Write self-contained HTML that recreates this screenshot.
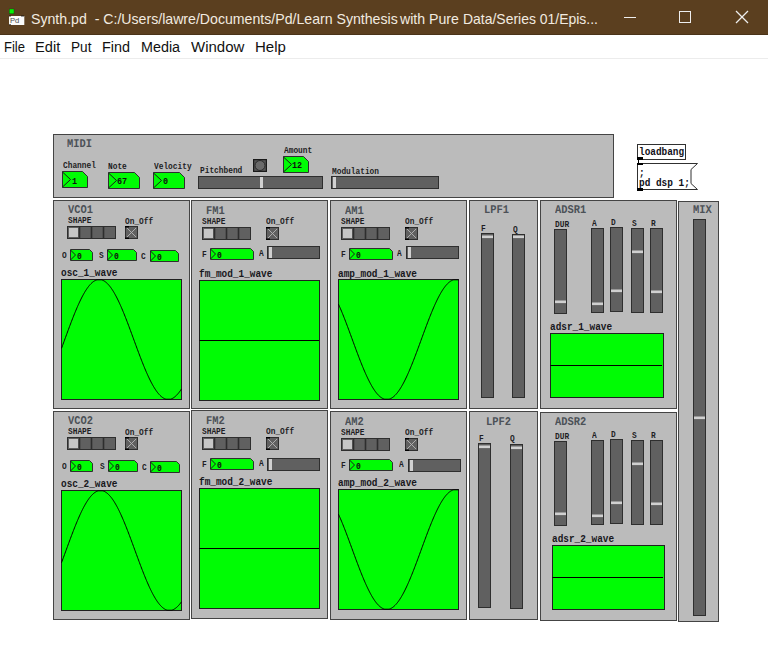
<!DOCTYPE html>
<html><head><meta charset="utf-8"><style>
html,body{margin:0;padding:0;width:768px;height:652px;overflow:hidden;background:#fff;position:relative}
.t{position:absolute;font-family:"Liberation Mono",monospace;white-space:pre;line-height:1;transform-origin:0 0}
.ui{position:absolute;font-family:"Liberation Sans",sans-serif;white-space:pre;line-height:1;transform-origin:0 0}
</style></head><body>
<div style="position:absolute;left:0;top:0;width:768px;height:35px;background:#5b3f1f"></div>
<div style="position:absolute;left:0;top:34px;width:768px;height:1px;background:#4a3318"></div>
<svg style="position:absolute;left:8px;top:8px" width="18" height="18"><rect x="1.2" y="1" width="4.8" height="4.8" fill="#06f006" stroke="#0a4a0a" stroke-width="0.4"/><rect x="1" y="8" width="15.3" height="9" fill="#fafafa"/><rect x="1" y="7.6" width="2" height="0.8" fill="#111"/><rect x="13" y="7.6" width="3" height="0.8" fill="#111"/><rect x="1" y="16.4" width="2" height="0.8" fill="#111"/><text x="1.9" y="14.9" font-family="Liberation Sans" font-size="7.6" fill="#4a4a4a">Pd</text></svg>
<div class="ui" style="left:31px;top:10.5px;font-size:15px;color:#f2ebe0;transform:scaleX(0.942)">Synth.pd  - C:/Users/lawre/Documents/Pd/Learn Synthesis</div>
<div class="ui" style="left:400px;top:10.5px;font-size:15px;color:#f2ebe0;transform:scaleX(0.942)">with Pure</div>
<div class="ui" style="left:463px;top:10.5px;font-size:15px;color:#f2ebe0;transform:scaleX(0.930)">Data/Series 01/Epis...</div>
<div style="position:absolute;left:624px;top:17px;width:12px;height:1px;background:#eee"></div>
<div style="position:absolute;left:679px;top:11px;width:12px;height:12px;box-sizing:border-box;border:1px solid #eee"></div>
<svg style="position:absolute;left:735px;top:10px" width="14" height="14"><line x1="1" y1="1" x2="13" y2="13" stroke="#eee" stroke-width="1.2"/><line x1="13" y1="1" x2="1" y2="13" stroke="#eee" stroke-width="1.2"/></svg>
<div class="ui" style="left:3.6px;top:39.3px;font-size:15.5px;color:#111;transform:scaleX(0.842)">File</div>
<div class="ui" style="left:35px;top:39.3px;font-size:15.5px;color:#111;transform:scaleX(0.943)">Edit</div>
<div class="ui" style="left:70.9px;top:39.3px;font-size:15.5px;color:#111;transform:scaleX(0.878)">Put</div>
<div class="ui" style="left:101.9px;top:39.3px;font-size:15.5px;color:#111;transform:scaleX(0.929)">Find</div>
<div class="ui" style="left:141px;top:39.3px;font-size:15.5px;color:#111;transform:scaleX(0.926)">Media</div>
<div class="ui" style="left:191.2px;top:39.3px;font-size:15.5px;color:#111;transform:scaleX(0.968)">Window</div>
<div class="ui" style="left:255px;top:39.3px;font-size:15.5px;color:#111;transform:scaleX(0.968)">Help</div>
<div style="position:absolute;left:0;top:58px;width:768px;height:1px;background:#ececec"></div>
<div style="position:absolute;left:53px;top:134px;width:561px;height:64px;background:#bbbbbb;box-sizing:border-box;border:1px solid #444444;"></div>
<div class="t" style="left:67px;top:138.8px;font-size:11.8px;font-weight:bold;color:#4c5157;transform:scaleX(0.883);text-rendering:geometricPrecision;">MIDI</div>
<div class="t" style="left:62.5px;top:162px;font-size:9px;font-weight:bold;color:#1e1e24;transform:scaleX(0.87);">Channel</div>
<svg style="position:absolute;left:62px;top:171px" width="26" height="17"><polygon points="0.5,0.5 20.5,0.5 25.5,5.5 25.5,16.5 0.5,16.5" fill="#00fc04" stroke="#2e2e2e" stroke-width="1"/><polyline points="0.5,1 8.5,8.5 0.5,16" fill="none" stroke="#1a1a1a" stroke-width="1"/></svg>
<div class="t" style="left:71.5px;top:177px;font-size:9.2px;font-weight:bold;color:#101010;transform:scaleX(0.92);">1</div>
<div class="t" style="left:108px;top:163px;font-size:9px;font-weight:bold;color:#1e1e24;transform:scaleX(0.87);">Note</div>
<svg style="position:absolute;left:108px;top:172px" width="32" height="17"><polygon points="0.5,0.5 26.5,0.5 31.5,5.5 31.5,16.5 0.5,16.5" fill="#00fc04" stroke="#2e2e2e" stroke-width="1"/><polyline points="0.5,1 8.5,8.5 0.5,16" fill="none" stroke="#1a1a1a" stroke-width="1"/></svg>
<div class="t" style="left:117px;top:177.3px;font-size:9.2px;font-weight:bold;color:#101010;transform:scaleX(0.92);">67</div>
<div class="t" style="left:153.5px;top:163px;font-size:9px;font-weight:bold;color:#1e1e24;transform:scaleX(0.87);">Velocity</div>
<svg style="position:absolute;left:153px;top:172px" width="32" height="17"><polygon points="0.5,0.5 26.5,0.5 31.5,5.5 31.5,16.5 0.5,16.5" fill="#00fc04" stroke="#2e2e2e" stroke-width="1"/><polyline points="0.5,1 8.5,8.5 0.5,16" fill="none" stroke="#1a1a1a" stroke-width="1"/></svg>
<div class="t" style="left:162.5px;top:177.3px;font-size:9.2px;font-weight:bold;color:#101010;transform:scaleX(0.92);">0</div>
<div class="t" style="left:199.5px;top:167px;font-size:9px;font-weight:bold;color:#1e1e24;transform:scaleX(0.87);">Pitchbend</div>
<div style="position:absolute;left:198px;top:176px;width:125px;height:13px;background:#606060;box-sizing:border-box;border:1px solid #2e2e2e;"></div>
<div style="position:absolute;left:260px;top:177px;width:2.6px;height:11px;background:#d0d0d0"></div>
<svg style="position:absolute;left:253px;top:159px" width="14" height="13"><rect x="0.5" y="0.5" width="13" height="12" fill="#555" stroke="#1a1a1a" stroke-width="1.4"/><circle cx="7" cy="6.5" r="5" fill="#6a6a6a" stroke="#2a2a2a" stroke-width="1"/></svg>
<div class="t" style="left:284.2px;top:147px;font-size:9px;font-weight:bold;color:#1e1e24;transform:scaleX(0.87);">Amount</div>
<svg style="position:absolute;left:283px;top:156px" width="26" height="17"><polygon points="0.5,0.5 20.5,0.5 25.5,5.5 25.5,16.5 0.5,16.5" fill="#00fc04" stroke="#2e2e2e" stroke-width="1"/><polyline points="0.5,1 8.5,8.5 0.5,16" fill="none" stroke="#1a1a1a" stroke-width="1"/></svg>
<div class="t" style="left:291.5px;top:161.3px;font-size:9.2px;font-weight:bold;color:#101010;transform:scaleX(0.92);">12</div>
<div class="t" style="left:332px;top:168px;font-size:9px;font-weight:bold;color:#1e1e24;transform:scaleX(0.87);">Modulation</div>
<div style="position:absolute;left:331px;top:176px;width:108px;height:13px;background:#606060;box-sizing:border-box;border:1px solid #2e2e2e;"></div>
<div style="position:absolute;left:333px;top:177px;width:2.6px;height:11px;background:#d0d0d0"></div>
<div style="position:absolute;left:637px;top:144px;width:49px;height:16px;background:#fff;box-sizing:border-box;border:1px solid #303030;"></div>
<div class="t" style="left:639px;top:147.5px;font-size:10px;font-weight:bold;color:#101018;transform:scaleX(0.94);">loadbang</div>
<div style="position:absolute;left:637px;top:157px;width:6px;height:3px;background:#000;box-sizing:border-box;"></div>
<div style="position:absolute;left:638px;top:160px;width:1px;height:4px;background:#000;box-sizing:border-box;"></div>
<svg style="position:absolute;left:637px;top:163px" width="62" height="28"><polygon points="0.5,0.5 60.5,0.5 54,6.5 54,20.5 60.5,26.5 0.5,26.5" fill="#fff" stroke="#303030"/></svg>
<div style="position:absolute;left:637px;top:163px;width:6px;height:2px;background:#000;box-sizing:border-box;"></div>
<div style="position:absolute;left:637px;top:188px;width:6px;height:3px;background:#000;box-sizing:border-box;"></div>
<div class="t" style="left:639px;top:168.5px;font-size:10px;font-weight:bold;color:#101018;transform:scaleX(0.94);">;</div>
<div class="t" style="left:639px;top:178.8px;font-size:10px;font-weight:bold;color:#101018;transform:scaleX(0.94);">pd dsp 1;</div>
<div style="position:absolute;left:53px;top:200px;width:137px;height:209px;background:#bbbbbb;box-sizing:border-box;border:1px solid #444444;"></div>
<div class="t" style="left:67.5px;top:205.0px;font-size:11.8px;font-weight:bold;color:#4c5157;transform:scaleX(0.883);text-rendering:geometricPrecision;">VCO1</div>
<div class="t" style="left:67.7px;top:217px;font-size:9px;font-weight:bold;color:#1e1e24;transform:scaleX(0.87);">SHAPE</div>
<div class="t" style="left:125px;top:217.5px;font-size:9px;font-weight:bold;color:#1e1e24;transform:scaleX(0.87);">On_Off</div>
<svg style="position:absolute;left:67px;top:226px" width="49" height="13"><rect x="0.5" y="0.5" width="48" height="12" fill="#606060" stroke="#2e2e2e"/><line x1="12.5" y1="0" x2="12.5" y2="13" stroke="#2e2e2e" stroke-width="1.6"/><line x1="24.5" y1="0" x2="24.5" y2="13" stroke="#2e2e2e" stroke-width="1.6"/><line x1="36.5" y1="0" x2="36.5" y2="13" stroke="#2e2e2e" stroke-width="1.6"/><rect x="2" y="2" width="9" height="9" fill="#c6c6c6"/></svg>
<svg style="position:absolute;left:125px;top:226px" width="13" height="13"><rect x="0.5" y="0.5" width="12" height="12" fill="#606060" stroke="#2e2e2e"/><line x1="2" y1="2" x2="11" y2="11" stroke="#b4b4b4" stroke-width="0.9"/><line x1="11" y1="2" x2="2" y2="11" stroke="#b4b4b4" stroke-width="0.9"/><rect x="0" y="0" width="4" height="1.5" fill="#000"/><rect x="0" y="11.5" width="4" height="1.5" fill="#000"/></svg>
<div class="t" style="left:61.5px;top:252.2px;font-size:9px;font-weight:bold;color:#1e1e24;transform:scaleX(0.87);">O</div>
<svg style="position:absolute;left:70px;top:249px" width="23" height="12"><polygon points="0.5,0.5 19.5,0.5 22.5,3.5 22.5,11.5 0.5,11.5" fill="#00fc04" stroke="#2e2e2e" stroke-width="1"/><polyline points="0.5,1 5.5,6.0 0.5,11" fill="none" stroke="#1a1a1a" stroke-width="1"/></svg>
<div class="t" style="left:77px;top:253px;font-size:8.5px;font-weight:bold;color:#101010;transform:scaleX(0.95);">0</div>
<div class="t" style="left:99.0px;top:252.2px;font-size:9px;font-weight:bold;color:#1e1e24;transform:scaleX(0.87);">S</div>
<svg style="position:absolute;left:107px;top:249px" width="30" height="12"><polygon points="0.5,0.5 26.5,0.5 29.5,3.5 29.5,11.5 0.5,11.5" fill="#00fc04" stroke="#2e2e2e" stroke-width="1"/><polyline points="0.5,1 5.5,6.0 0.5,11" fill="none" stroke="#1a1a1a" stroke-width="1"/></svg>
<div class="t" style="left:114px;top:253px;font-size:8.5px;font-weight:bold;color:#101010;transform:scaleX(0.95);">0</div>
<div class="t" style="left:141px;top:253px;font-size:9px;font-weight:bold;color:#1e1e24;transform:scaleX(0.87);">C</div>
<svg style="position:absolute;left:149.5px;top:250px" width="29" height="12"><polygon points="0.5,0.5 25.5,0.5 28.5,3.5 28.5,11.5 0.5,11.5" fill="#00fc04" stroke="#2e2e2e" stroke-width="1"/><polyline points="0.5,1 5.5,6.0 0.5,11" fill="none" stroke="#1a1a1a" stroke-width="1"/></svg>
<div class="t" style="left:156.5px;top:254px;font-size:8.5px;font-weight:bold;color:#101010;transform:scaleX(0.95);">0</div>
<div class="t" style="left:60.7px;top:269px;font-size:10px;font-weight:bold;color:#17171c;transform:scaleX(0.94);">osc_1_wave</div>
<svg style="position:absolute;left:61px;top:279px" width="121" height="121"><rect x="0.5" y="0.5" width="120" height="120" fill="#00fc04" stroke="#202020"/><polyline points="0.50,69.35 1.00,67.99 1.50,66.64 2.00,65.28 2.50,63.91 3.00,62.55 3.50,61.18 4.00,59.82 4.50,58.45 5.00,57.09 5.50,55.72 6.00,54.36 6.50,53.01 7.00,51.65 7.50,50.31 8.00,48.96 8.50,47.62 9.00,46.29 9.50,44.97 10.00,43.66 10.50,42.35 11.00,41.05 11.50,39.77 12.00,38.49 12.50,37.22 13.00,35.97 13.50,34.73 14.00,33.50 14.50,32.29 15.00,31.09 15.50,29.91 16.00,28.74 16.50,27.59 17.00,26.46 17.50,25.34 18.00,24.25 18.50,23.17 19.00,22.11 19.50,21.07 20.00,20.05 20.50,19.05 21.00,18.07 21.50,17.12 22.00,16.19 22.50,15.28 23.00,14.39 23.50,13.53 24.00,12.69 24.50,11.88 25.00,11.09 25.50,10.33 26.00,9.59 26.50,8.88 27.00,8.20 27.50,7.54 28.00,6.92 28.50,6.32 29.00,5.74 29.50,5.20 30.00,4.68 30.50,4.20 31.00,3.74 31.50,3.31 32.00,2.91 32.50,2.54 33.00,2.21 33.50,1.90 34.00,1.62 34.50,1.37 35.00,1.16 35.50,0.97 36.00,0.81 36.50,0.80 37.00,0.80 37.50,0.80 38.00,0.80 38.50,0.80 39.00,0.80 39.50,0.80 40.00,0.80 40.50,0.81 41.00,0.97 41.50,1.16 42.00,1.37 42.50,1.62 43.00,1.90 43.50,2.21 44.00,2.54 44.50,2.91 45.00,3.31 45.50,3.74 46.00,4.20 46.50,4.68 47.00,5.20 47.50,5.74 48.00,6.32 48.50,6.92 49.00,7.54 49.50,8.20 50.00,8.88 50.50,9.59 51.00,10.33 51.50,11.09 52.00,11.88 52.50,12.69 53.00,13.53 53.50,14.39 54.00,15.28 54.50,16.19 55.00,17.12 55.50,18.07 56.00,19.05 56.50,20.05 57.00,21.07 57.50,22.11 58.00,23.17 58.50,24.25 59.00,25.34 59.50,26.46 60.00,27.59 60.50,28.74 61.00,29.91 61.50,31.09 62.00,32.29 62.50,33.50 63.00,34.73 63.50,35.97 64.00,37.22 64.50,38.49 65.00,39.77 65.50,41.05 66.00,42.35 66.50,43.66 67.00,44.97 67.50,46.29 68.00,47.62 68.50,48.96 69.00,50.31 69.50,51.65 70.00,53.01 70.50,54.36 71.00,55.72 71.50,57.09 72.00,58.45 72.50,59.82 73.00,61.18 73.50,62.55 74.00,63.91 74.50,65.28 75.00,66.64 75.50,67.99 76.00,69.35 76.50,70.69 77.00,72.04 77.50,73.38 78.00,74.71 78.50,76.03 79.00,77.34 79.50,78.65 80.00,79.95 80.50,81.23 81.00,82.51 81.50,83.78 82.00,85.03 82.50,86.27 83.00,87.50 83.50,88.71 84.00,89.91 84.50,91.09 85.00,92.26 85.50,93.41 86.00,94.54 86.50,95.66 87.00,96.75 87.50,97.83 88.00,98.89 88.50,99.93 89.00,100.95 89.50,101.95 90.00,102.93 90.50,103.88 91.00,104.81 91.50,105.72 92.00,106.61 92.50,107.47 93.00,108.31 93.50,109.12 94.00,109.91 94.50,110.67 95.00,111.41 95.50,112.12 96.00,112.80 96.50,113.46 97.00,114.08 97.50,114.68 98.00,115.26 98.50,115.80 99.00,116.32 99.50,116.80 100.00,117.26 100.50,117.69 101.00,118.09 101.50,118.46 102.00,118.79 102.50,119.10 103.00,119.38 103.50,119.63 104.00,119.84 104.50,120.03 105.00,120.19 105.50,120.20 106.00,120.20 106.50,120.20 107.00,120.20 107.50,120.20 108.00,120.20 108.50,120.20 109.00,120.20 109.50,120.19 110.00,120.03 110.50,119.84 111.00,119.63 111.50,119.38 112.00,119.10 112.50,118.79 113.00,118.46 113.50,118.09 114.00,117.69 114.50,117.26 115.00,116.80 115.50,116.32 116.00,115.80 116.50,115.26 117.00,114.68 117.50,114.08 118.00,113.46 118.50,112.80 119.00,112.12 119.50,111.41 120.00,110.67 120.50,109.91" fill="none" stroke="#000" stroke-width="1.0"/></svg>
<div style="position:absolute;left:53px;top:411px;width:137px;height:209px;background:#bbbbbb;box-sizing:border-box;border:1px solid #444444;"></div>
<div class="t" style="left:67.5px;top:416.0px;font-size:11.8px;font-weight:bold;color:#4c5157;transform:scaleX(0.883);text-rendering:geometricPrecision;">VCO2</div>
<div class="t" style="left:67.7px;top:428px;font-size:9px;font-weight:bold;color:#1e1e24;transform:scaleX(0.87);">SHAPE</div>
<div class="t" style="left:125px;top:428.5px;font-size:9px;font-weight:bold;color:#1e1e24;transform:scaleX(0.87);">On_Off</div>
<svg style="position:absolute;left:67px;top:437px" width="49" height="13"><rect x="0.5" y="0.5" width="48" height="12" fill="#606060" stroke="#2e2e2e"/><line x1="12.5" y1="0" x2="12.5" y2="13" stroke="#2e2e2e" stroke-width="1.6"/><line x1="24.5" y1="0" x2="24.5" y2="13" stroke="#2e2e2e" stroke-width="1.6"/><line x1="36.5" y1="0" x2="36.5" y2="13" stroke="#2e2e2e" stroke-width="1.6"/><rect x="2" y="2" width="9" height="9" fill="#c6c6c6"/></svg>
<svg style="position:absolute;left:125px;top:437px" width="13" height="13"><rect x="0.5" y="0.5" width="12" height="12" fill="#606060" stroke="#2e2e2e"/><line x1="2" y1="2" x2="11" y2="11" stroke="#b4b4b4" stroke-width="0.9"/><line x1="11" y1="2" x2="2" y2="11" stroke="#b4b4b4" stroke-width="0.9"/><rect x="0" y="0" width="4" height="1.5" fill="#000"/><rect x="0" y="11.5" width="4" height="1.5" fill="#000"/></svg>
<div class="t" style="left:61.5px;top:463.2px;font-size:9px;font-weight:bold;color:#1e1e24;transform:scaleX(0.87);">O</div>
<svg style="position:absolute;left:70px;top:460px" width="23" height="12"><polygon points="0.5,0.5 19.5,0.5 22.5,3.5 22.5,11.5 0.5,11.5" fill="#00fc04" stroke="#2e2e2e" stroke-width="1"/><polyline points="0.5,1 5.5,6.0 0.5,11" fill="none" stroke="#1a1a1a" stroke-width="1"/></svg>
<div class="t" style="left:77px;top:464px;font-size:8.5px;font-weight:bold;color:#101010;transform:scaleX(0.95);">0</div>
<div class="t" style="left:99.5px;top:463.2px;font-size:9px;font-weight:bold;color:#1e1e24;transform:scaleX(0.87);">S</div>
<svg style="position:absolute;left:108px;top:460px" width="30" height="12"><polygon points="0.5,0.5 26.5,0.5 29.5,3.5 29.5,11.5 0.5,11.5" fill="#00fc04" stroke="#2e2e2e" stroke-width="1"/><polyline points="0.5,1 5.5,6.0 0.5,11" fill="none" stroke="#1a1a1a" stroke-width="1"/></svg>
<div class="t" style="left:115px;top:464px;font-size:8.5px;font-weight:bold;color:#101010;transform:scaleX(0.95);">0</div>
<div class="t" style="left:142px;top:464px;font-size:9px;font-weight:bold;color:#1e1e24;transform:scaleX(0.87);">C</div>
<svg style="position:absolute;left:149.5px;top:461px" width="30" height="12"><polygon points="0.5,0.5 26.5,0.5 29.5,3.5 29.5,11.5 0.5,11.5" fill="#00fc04" stroke="#2e2e2e" stroke-width="1"/><polyline points="0.5,1 5.5,6.0 0.5,11" fill="none" stroke="#1a1a1a" stroke-width="1"/></svg>
<div class="t" style="left:156.5px;top:465px;font-size:8.5px;font-weight:bold;color:#101010;transform:scaleX(0.95);">0</div>
<div class="t" style="left:60.7px;top:480px;font-size:10px;font-weight:bold;color:#17171c;transform:scaleX(0.94);">osc_2_wave</div>
<svg style="position:absolute;left:61px;top:490px" width="121" height="121"><rect x="0.5" y="0.5" width="120" height="120" fill="#00fc04" stroke="#202020"/><polyline points="0.50,72.71 1.00,71.37 1.50,70.02 2.00,68.67 2.50,67.31 3.00,65.96 3.50,64.59 4.00,63.23 4.50,61.87 5.00,60.50 5.50,59.13 6.00,57.77 6.50,56.41 7.00,55.04 7.50,53.69 8.00,52.33 8.50,50.98 9.00,49.63 9.50,48.29 10.00,46.96 10.50,45.63 11.00,44.31 11.50,43.00 12.00,41.70 12.50,40.41 13.00,39.13 13.50,37.85 14.00,36.60 14.50,35.35 15.00,34.12 15.50,32.90 16.00,31.69 16.50,30.50 17.00,29.32 17.50,28.17 18.00,27.02 18.50,25.90 19.00,24.79 19.50,23.70 20.00,22.63 20.50,21.59 21.00,20.56 21.50,19.55 22.00,18.56 22.50,17.59 23.00,16.65 23.50,15.73 24.00,14.83 24.50,13.96 25.00,13.11 25.50,12.28 26.00,11.48 26.50,10.71 27.00,9.96 27.50,9.23 28.00,8.54 28.50,7.87 29.00,7.23 29.50,6.61 30.00,6.03 30.50,5.47 31.00,4.94 31.50,4.44 32.00,3.96 32.50,3.52 33.00,3.11 33.50,2.72 34.00,2.37 34.50,2.05 35.00,1.75 35.50,1.49 36.00,1.26 36.50,1.06 37.00,0.89 37.50,0.80 38.00,0.80 38.50,0.80 39.00,0.80 39.50,0.80 40.00,0.80 40.50,0.80 41.00,0.80 41.50,0.80 42.00,0.89 42.50,1.06 43.00,1.26 43.50,1.49 44.00,1.75 44.50,2.05 45.00,2.37 45.50,2.72 46.00,3.11 46.50,3.52 47.00,3.96 47.50,4.44 48.00,4.94 48.50,5.47 49.00,6.03 49.50,6.61 50.00,7.23 50.50,7.87 51.00,8.54 51.50,9.23 52.00,9.96 52.50,10.71 53.00,11.48 53.50,12.28 54.00,13.11 54.50,13.96 55.00,14.83 55.50,15.73 56.00,16.65 56.50,17.59 57.00,18.56 57.50,19.55 58.00,20.56 58.50,21.59 59.00,22.63 59.50,23.70 60.00,24.79 60.50,25.90 61.00,27.02 61.50,28.17 62.00,29.32 62.50,30.50 63.00,31.69 63.50,32.90 64.00,34.12 64.50,35.35 65.00,36.60 65.50,37.85 66.00,39.13 66.50,40.41 67.00,41.70 67.50,43.00 68.00,44.31 68.50,45.63 69.00,46.96 69.50,48.29 70.00,49.63 70.50,50.98 71.00,52.33 71.50,53.69 72.00,55.04 72.50,56.41 73.00,57.77 73.50,59.13 74.00,60.50 74.50,61.87 75.00,63.23 75.50,64.59 76.00,65.96 76.50,67.31 77.00,68.67 77.50,70.02 78.00,71.37 78.50,72.71 79.00,74.04 79.50,75.37 80.00,76.69 80.50,78.00 81.00,79.30 81.50,80.59 82.00,81.87 82.50,83.15 83.00,84.40 83.50,85.65 84.00,86.88 84.50,88.10 85.00,89.31 85.50,90.50 86.00,91.68 86.50,92.83 87.00,93.98 87.50,95.10 88.00,96.21 88.50,97.30 89.00,98.37 89.50,99.41 90.00,100.44 90.50,101.45 91.00,102.44 91.50,103.41 92.00,104.35 92.50,105.27 93.00,106.17 93.50,107.04 94.00,107.89 94.50,108.72 95.00,109.52 95.50,110.29 96.00,111.04 96.50,111.77 97.00,112.46 97.50,113.13 98.00,113.77 98.50,114.39 99.00,114.97 99.50,115.53 100.00,116.06 100.50,116.56 101.00,117.04 101.50,117.48 102.00,117.89 102.50,118.28 103.00,118.63 103.50,118.95 104.00,119.25 104.50,119.51 105.00,119.74 105.50,119.94 106.00,120.11 106.50,120.20 107.00,120.20 107.50,120.20 108.00,120.20 108.50,120.20 109.00,120.20 109.50,120.20 110.00,120.20 110.50,120.20 111.00,120.11 111.50,119.94 112.00,119.74 112.50,119.51 113.00,119.25 113.50,118.95 114.00,118.63 114.50,118.28 115.00,117.89 115.50,117.48 116.00,117.04 116.50,116.56 117.00,116.06 117.50,115.53 118.00,114.97 118.50,114.39 119.00,113.77 119.50,113.13 120.00,112.46 120.50,111.77" fill="none" stroke="#000" stroke-width="1.0"/></svg>
<div style="position:absolute;left:191px;top:200px;width:137px;height:209px;background:#bbbbbb;box-sizing:border-box;border:1px solid #444444;"></div>
<div class="t" style="left:205.5px;top:205.5px;font-size:11.8px;font-weight:bold;color:#4c5157;transform:scaleX(0.883);text-rendering:geometricPrecision;">FM1</div>
<div class="t" style="left:201.7px;top:218px;font-size:9px;font-weight:bold;color:#1e1e24;transform:scaleX(0.87);">SHAPE</div>
<div class="t" style="left:265.5px;top:218px;font-size:9px;font-weight:bold;color:#1e1e24;transform:scaleX(0.87);">On_Off</div>
<svg style="position:absolute;left:201.5px;top:227px" width="49" height="13"><rect x="0.5" y="0.5" width="48" height="12" fill="#606060" stroke="#2e2e2e"/><line x1="12.5" y1="0" x2="12.5" y2="13" stroke="#2e2e2e" stroke-width="1.6"/><line x1="24.5" y1="0" x2="24.5" y2="13" stroke="#2e2e2e" stroke-width="1.6"/><line x1="36.5" y1="0" x2="36.5" y2="13" stroke="#2e2e2e" stroke-width="1.6"/><rect x="2" y="2" width="9" height="9" fill="#c6c6c6"/></svg>
<svg style="position:absolute;left:265.5px;top:227px" width="13" height="13"><rect x="0.5" y="0.5" width="12" height="12" fill="#606060" stroke="#2e2e2e"/><line x1="2" y1="2" x2="11" y2="11" stroke="#b4b4b4" stroke-width="0.9"/><line x1="11" y1="2" x2="2" y2="11" stroke="#b4b4b4" stroke-width="0.9"/><rect x="0" y="0" width="4" height="1.5" fill="#000"/><rect x="0" y="11.5" width="4" height="1.5" fill="#000"/></svg>
<div class="t" style="left:201.5px;top:251px;font-size:9px;font-weight:bold;color:#1e1e24;transform:scaleX(0.87);">F</div>
<svg style="position:absolute;left:210px;top:248px" width="44" height="12"><polygon points="0.5,0.5 40.5,0.5 43.5,3.5 43.5,11.5 0.5,11.5" fill="#00fc04" stroke="#2e2e2e" stroke-width="1"/><polyline points="0.5,1 5.5,6.0 0.5,11" fill="none" stroke="#1a1a1a" stroke-width="1"/></svg>
<div class="t" style="left:217px;top:252.4px;font-size:8.5px;font-weight:bold;color:#101010;transform:scaleX(0.95);">0</div>
<div class="t" style="left:258.5px;top:249.5px;font-size:9px;font-weight:bold;color:#1e1e24;transform:scaleX(0.87);">A</div>
<div style="position:absolute;left:267px;top:246px;width:53px;height:13px;background:#606060;box-sizing:border-box;border:1px solid #2e2e2e;"></div>
<div style="position:absolute;left:269px;top:247px;width:2.6px;height:11px;background:#d0d0d0"></div>
<div class="t" style="left:199.2px;top:270px;font-size:10px;font-weight:bold;color:#17171c;transform:scaleX(0.94);">fm_mod_1_wave</div>
<svg style="position:absolute;left:199px;top:280px" width="121" height="121"><rect x="0.5" y="0.5" width="120" height="120" fill="#00fc04" stroke="#202020"/><line x1="0.5" y1="60.5" x2="120" y2="60.5" stroke="#000" stroke-width="1.1"/></svg>
<div style="position:absolute;left:191px;top:410px;width:137px;height:209px;background:#bbbbbb;box-sizing:border-box;border:1px solid #444444;"></div>
<div class="t" style="left:205.5px;top:415.5px;font-size:11.8px;font-weight:bold;color:#4c5157;transform:scaleX(0.883);text-rendering:geometricPrecision;">FM2</div>
<div class="t" style="left:201.7px;top:428px;font-size:9px;font-weight:bold;color:#1e1e24;transform:scaleX(0.87);">SHAPE</div>
<div class="t" style="left:265.5px;top:428px;font-size:9px;font-weight:bold;color:#1e1e24;transform:scaleX(0.87);">On_Off</div>
<svg style="position:absolute;left:201.5px;top:437px" width="49" height="13"><rect x="0.5" y="0.5" width="48" height="12" fill="#606060" stroke="#2e2e2e"/><line x1="12.5" y1="0" x2="12.5" y2="13" stroke="#2e2e2e" stroke-width="1.6"/><line x1="24.5" y1="0" x2="24.5" y2="13" stroke="#2e2e2e" stroke-width="1.6"/><line x1="36.5" y1="0" x2="36.5" y2="13" stroke="#2e2e2e" stroke-width="1.6"/><rect x="2" y="2" width="9" height="9" fill="#c6c6c6"/></svg>
<svg style="position:absolute;left:265.5px;top:437px" width="13" height="13"><rect x="0.5" y="0.5" width="12" height="12" fill="#606060" stroke="#2e2e2e"/><line x1="2" y1="2" x2="11" y2="11" stroke="#b4b4b4" stroke-width="0.9"/><line x1="11" y1="2" x2="2" y2="11" stroke="#b4b4b4" stroke-width="0.9"/><rect x="0" y="0" width="4" height="1.5" fill="#000"/><rect x="0" y="11.5" width="4" height="1.5" fill="#000"/></svg>
<div class="t" style="left:201.5px;top:461px;font-size:9px;font-weight:bold;color:#1e1e24;transform:scaleX(0.87);">F</div>
<svg style="position:absolute;left:210px;top:458px" width="44" height="12"><polygon points="0.5,0.5 40.5,0.5 43.5,3.5 43.5,11.5 0.5,11.5" fill="#00fc04" stroke="#2e2e2e" stroke-width="1"/><polyline points="0.5,1 5.5,6.0 0.5,11" fill="none" stroke="#1a1a1a" stroke-width="1"/></svg>
<div class="t" style="left:217px;top:462.4px;font-size:8.5px;font-weight:bold;color:#101010;transform:scaleX(0.95);">0</div>
<div class="t" style="left:258.5px;top:459.5px;font-size:9px;font-weight:bold;color:#1e1e24;transform:scaleX(0.87);">A</div>
<div style="position:absolute;left:267px;top:458px;width:53px;height:13px;background:#606060;box-sizing:border-box;border:1px solid #2e2e2e;"></div>
<div style="position:absolute;left:269px;top:459px;width:2.6px;height:11px;background:#d0d0d0"></div>
<div class="t" style="left:199.2px;top:478px;font-size:10px;font-weight:bold;color:#17171c;transform:scaleX(0.94);">fm_mod_2_wave</div>
<svg style="position:absolute;left:199px;top:488px" width="121" height="121"><rect x="0.5" y="0.5" width="120" height="120" fill="#00fc04" stroke="#202020"/><line x1="0.5" y1="60.5" x2="120" y2="60.5" stroke="#000" stroke-width="1.1"/></svg>
<div style="position:absolute;left:330px;top:200px;width:137px;height:209px;background:#bbbbbb;box-sizing:border-box;border:1px solid #444444;"></div>
<div class="t" style="left:344.5px;top:205.5px;font-size:11.8px;font-weight:bold;color:#4c5157;transform:scaleX(0.883);text-rendering:geometricPrecision;">AM1</div>
<div class="t" style="left:340.7px;top:218px;font-size:9px;font-weight:bold;color:#1e1e24;transform:scaleX(0.87);">SHAPE</div>
<div class="t" style="left:404.5px;top:218px;font-size:9px;font-weight:bold;color:#1e1e24;transform:scaleX(0.87);">On_Off</div>
<svg style="position:absolute;left:340.5px;top:227px" width="49" height="13"><rect x="0.5" y="0.5" width="48" height="12" fill="#606060" stroke="#2e2e2e"/><line x1="12.5" y1="0" x2="12.5" y2="13" stroke="#2e2e2e" stroke-width="1.6"/><line x1="24.5" y1="0" x2="24.5" y2="13" stroke="#2e2e2e" stroke-width="1.6"/><line x1="36.5" y1="0" x2="36.5" y2="13" stroke="#2e2e2e" stroke-width="1.6"/><rect x="2" y="2" width="9" height="9" fill="#c6c6c6"/></svg>
<svg style="position:absolute;left:404.5px;top:227px" width="13" height="13"><rect x="0.5" y="0.5" width="12" height="12" fill="#606060" stroke="#2e2e2e"/><line x1="2" y1="2" x2="11" y2="11" stroke="#b4b4b4" stroke-width="0.9"/><line x1="11" y1="2" x2="2" y2="11" stroke="#b4b4b4" stroke-width="0.9"/><rect x="0" y="0" width="4" height="1.5" fill="#000"/><rect x="0" y="11.5" width="4" height="1.5" fill="#000"/></svg>
<div class="t" style="left:340.5px;top:251px;font-size:9px;font-weight:bold;color:#1e1e24;transform:scaleX(0.87);">F</div>
<svg style="position:absolute;left:349px;top:248px" width="44" height="12"><polygon points="0.5,0.5 40.5,0.5 43.5,3.5 43.5,11.5 0.5,11.5" fill="#00fc04" stroke="#2e2e2e" stroke-width="1"/><polyline points="0.5,1 5.5,6.0 0.5,11" fill="none" stroke="#1a1a1a" stroke-width="1"/></svg>
<div class="t" style="left:356px;top:252.4px;font-size:8.5px;font-weight:bold;color:#101010;transform:scaleX(0.95);">0</div>
<div class="t" style="left:397.0px;top:249.5px;font-size:9px;font-weight:bold;color:#1e1e24;transform:scaleX(0.87);">A</div>
<div style="position:absolute;left:406px;top:246px;width:53px;height:13px;background:#606060;box-sizing:border-box;border:1px solid #2e2e2e;"></div>
<div style="position:absolute;left:408px;top:247px;width:2.6px;height:11px;background:#d0d0d0"></div>
<div class="t" style="left:338.2px;top:270px;font-size:10px;font-weight:bold;color:#17171c;transform:scaleX(0.94);">amp_mod_1_wave</div>
<svg style="position:absolute;left:338px;top:279px" width="121" height="121"><rect x="0.5" y="0.5" width="120" height="120" fill="#00fc04" stroke="#202020"/><polyline points="0.50,25.23 1.00,26.35 1.50,27.48 2.00,28.63 2.50,29.79 3.00,30.97 3.50,32.17 4.00,33.38 4.50,34.61 5.00,35.85 5.50,37.10 6.00,38.36 6.50,39.64 7.00,40.92 7.50,42.22 8.00,43.52 8.50,44.84 9.00,46.16 9.50,47.49 10.00,48.83 10.50,50.17 11.00,51.52 11.50,52.87 12.00,54.23 12.50,55.59 13.00,56.95 13.50,58.32 14.00,59.68 14.50,61.05 15.00,62.41 15.50,63.78 16.00,65.14 16.50,66.50 17.00,67.86 17.50,69.21 18.00,70.56 18.50,71.90 19.00,73.24 19.50,74.57 20.00,75.90 20.50,77.21 21.00,78.52 21.50,79.82 22.00,81.11 22.50,82.38 23.00,83.65 23.50,84.90 24.00,86.15 24.50,87.37 25.00,88.59 25.50,89.79 26.00,90.97 26.50,92.14 27.00,93.29 27.50,94.43 28.00,95.55 28.50,96.65 29.00,97.73 29.50,98.79 30.00,99.83 30.50,100.85 31.00,101.85 31.50,102.83 32.00,103.79 32.50,104.72 33.00,105.63 33.50,106.52 34.00,107.39 34.50,108.23 35.00,109.04 35.50,109.83 36.00,110.60 36.50,111.33 37.00,112.05 37.50,112.73 38.00,113.39 38.50,114.02 39.00,114.63 39.50,115.20 40.00,115.75 40.50,116.27 41.00,116.76 41.50,117.22 42.00,117.65 42.50,118.05 43.00,118.42 43.50,118.76 44.00,119.07 44.50,119.35 45.00,119.60 45.50,119.82 46.00,120.01 46.50,120.17 47.00,120.20 47.50,120.20 48.00,120.20 48.50,120.20 49.00,120.20 49.50,120.20 50.00,120.20 50.50,120.20 51.00,120.20 51.50,120.05 52.00,119.86 52.50,119.65 53.00,119.41 53.50,119.13 54.00,118.83 54.50,118.49 55.00,118.13 55.50,117.73 56.00,117.30 56.50,116.85 57.00,116.37 57.50,115.85 58.00,115.31 58.50,114.74 59.00,114.15 59.50,113.52 60.00,112.87 60.50,112.19 61.00,111.48 61.50,110.75 62.00,109.99 62.50,109.20 63.00,108.39 63.50,107.56 64.00,106.70 64.50,105.81 65.00,104.91 65.50,103.98 66.00,103.02 66.50,102.05 67.00,101.05 67.50,100.04 68.00,99.00 68.50,97.94 69.00,96.86 69.50,95.77 70.00,94.65 70.50,93.52 71.00,92.37 71.50,91.21 72.00,90.03 72.50,88.83 73.00,87.62 73.50,86.39 74.00,85.15 74.50,83.90 75.00,82.64 75.50,81.36 76.00,80.08 76.50,78.78 77.00,77.48 77.50,76.16 78.00,74.84 78.50,73.51 79.00,72.17 79.50,70.83 80.00,69.48 80.50,68.13 81.00,66.77 81.50,65.41 82.00,64.05 82.50,62.68 83.00,61.32 83.50,59.95 84.00,58.59 84.50,57.22 85.00,55.86 85.50,54.50 86.00,53.14 86.50,51.79 87.00,50.44 87.50,49.10 88.00,47.76 88.50,46.43 89.00,45.10 89.50,43.79 90.00,42.48 90.50,41.18 91.00,39.89 91.50,38.62 92.00,37.35 92.50,36.10 93.00,34.85 93.50,33.63 94.00,32.41 94.50,31.21 95.00,30.03 95.50,28.86 96.00,27.71 96.50,26.57 97.00,25.45 97.50,24.35 98.00,23.27 98.50,22.21 99.00,21.17 99.50,20.15 100.00,19.15 100.50,18.17 101.00,17.21 101.50,16.28 102.00,15.37 102.50,14.48 103.00,13.61 103.50,12.77 104.00,11.96 104.50,11.17 105.00,10.40 105.50,9.67 106.00,8.95 106.50,8.27 107.00,7.61 107.50,6.98 108.00,6.37 108.50,5.80 109.00,5.25 109.50,4.73 110.00,4.24 110.50,3.78 111.00,3.35 111.50,2.95 112.00,2.58 112.50,2.24 113.00,1.93 113.50,1.65 114.00,1.40 114.50,1.18 115.00,0.99 115.50,0.83 116.00,0.80 116.50,0.80 117.00,0.80 117.50,0.80 118.00,0.80 118.50,0.80 119.00,0.80 119.50,0.80 120.00,0.80 120.50,0.95" fill="none" stroke="#000" stroke-width="1.0"/></svg>
<div style="position:absolute;left:330px;top:411px;width:137px;height:209px;background:#bbbbbb;box-sizing:border-box;border:1px solid #444444;"></div>
<div class="t" style="left:344.5px;top:416.5px;font-size:11.8px;font-weight:bold;color:#4c5157;transform:scaleX(0.883);text-rendering:geometricPrecision;">AM2</div>
<div class="t" style="left:340.7px;top:429px;font-size:9px;font-weight:bold;color:#1e1e24;transform:scaleX(0.87);">SHAPE</div>
<div class="t" style="left:404.5px;top:429px;font-size:9px;font-weight:bold;color:#1e1e24;transform:scaleX(0.87);">On_Off</div>
<svg style="position:absolute;left:340.5px;top:438px" width="49" height="13"><rect x="0.5" y="0.5" width="48" height="12" fill="#606060" stroke="#2e2e2e"/><line x1="12.5" y1="0" x2="12.5" y2="13" stroke="#2e2e2e" stroke-width="1.6"/><line x1="24.5" y1="0" x2="24.5" y2="13" stroke="#2e2e2e" stroke-width="1.6"/><line x1="36.5" y1="0" x2="36.5" y2="13" stroke="#2e2e2e" stroke-width="1.6"/><rect x="2" y="2" width="9" height="9" fill="#c6c6c6"/></svg>
<svg style="position:absolute;left:404.5px;top:438px" width="13" height="13"><rect x="0.5" y="0.5" width="12" height="12" fill="#606060" stroke="#2e2e2e"/><line x1="2" y1="2" x2="11" y2="11" stroke="#b4b4b4" stroke-width="0.9"/><line x1="11" y1="2" x2="2" y2="11" stroke="#b4b4b4" stroke-width="0.9"/><rect x="0" y="0" width="4" height="1.5" fill="#000"/><rect x="0" y="11.5" width="4" height="1.5" fill="#000"/></svg>
<div class="t" style="left:340.5px;top:462px;font-size:9px;font-weight:bold;color:#1e1e24;transform:scaleX(0.87);">F</div>
<svg style="position:absolute;left:349px;top:459px" width="44" height="12"><polygon points="0.5,0.5 40.5,0.5 43.5,3.5 43.5,11.5 0.5,11.5" fill="#00fc04" stroke="#2e2e2e" stroke-width="1"/><polyline points="0.5,1 5.5,6.0 0.5,11" fill="none" stroke="#1a1a1a" stroke-width="1"/></svg>
<div class="t" style="left:356px;top:463.4px;font-size:8.5px;font-weight:bold;color:#101010;transform:scaleX(0.95);">0</div>
<div class="t" style="left:398.5px;top:460.5px;font-size:9px;font-weight:bold;color:#1e1e24;transform:scaleX(0.87);">A</div>
<div style="position:absolute;left:408px;top:459px;width:53px;height:13px;background:#606060;box-sizing:border-box;border:1px solid #2e2e2e;"></div>
<div style="position:absolute;left:410px;top:460px;width:2.6px;height:11px;background:#d0d0d0"></div>
<div class="t" style="left:338.2px;top:479px;font-size:10px;font-weight:bold;color:#17171c;transform:scaleX(0.94);">amp_mod_2_wave</div>
<svg style="position:absolute;left:338px;top:489px" width="121" height="121"><rect x="0.5" y="0.5" width="120" height="120" fill="#00fc04" stroke="#202020"/><polyline points="0.50,25.23 1.00,26.35 1.50,27.48 2.00,28.63 2.50,29.79 3.00,30.97 3.50,32.17 4.00,33.38 4.50,34.61 5.00,35.85 5.50,37.10 6.00,38.36 6.50,39.64 7.00,40.92 7.50,42.22 8.00,43.52 8.50,44.84 9.00,46.16 9.50,47.49 10.00,48.83 10.50,50.17 11.00,51.52 11.50,52.87 12.00,54.23 12.50,55.59 13.00,56.95 13.50,58.32 14.00,59.68 14.50,61.05 15.00,62.41 15.50,63.78 16.00,65.14 16.50,66.50 17.00,67.86 17.50,69.21 18.00,70.56 18.50,71.90 19.00,73.24 19.50,74.57 20.00,75.90 20.50,77.21 21.00,78.52 21.50,79.82 22.00,81.11 22.50,82.38 23.00,83.65 23.50,84.90 24.00,86.15 24.50,87.37 25.00,88.59 25.50,89.79 26.00,90.97 26.50,92.14 27.00,93.29 27.50,94.43 28.00,95.55 28.50,96.65 29.00,97.73 29.50,98.79 30.00,99.83 30.50,100.85 31.00,101.85 31.50,102.83 32.00,103.79 32.50,104.72 33.00,105.63 33.50,106.52 34.00,107.39 34.50,108.23 35.00,109.04 35.50,109.83 36.00,110.60 36.50,111.33 37.00,112.05 37.50,112.73 38.00,113.39 38.50,114.02 39.00,114.63 39.50,115.20 40.00,115.75 40.50,116.27 41.00,116.76 41.50,117.22 42.00,117.65 42.50,118.05 43.00,118.42 43.50,118.76 44.00,119.07 44.50,119.35 45.00,119.60 45.50,119.82 46.00,120.01 46.50,120.17 47.00,120.20 47.50,120.20 48.00,120.20 48.50,120.20 49.00,120.20 49.50,120.20 50.00,120.20 50.50,120.20 51.00,120.20 51.50,120.05 52.00,119.86 52.50,119.65 53.00,119.41 53.50,119.13 54.00,118.83 54.50,118.49 55.00,118.13 55.50,117.73 56.00,117.30 56.50,116.85 57.00,116.37 57.50,115.85 58.00,115.31 58.50,114.74 59.00,114.15 59.50,113.52 60.00,112.87 60.50,112.19 61.00,111.48 61.50,110.75 62.00,109.99 62.50,109.20 63.00,108.39 63.50,107.56 64.00,106.70 64.50,105.81 65.00,104.91 65.50,103.98 66.00,103.02 66.50,102.05 67.00,101.05 67.50,100.04 68.00,99.00 68.50,97.94 69.00,96.86 69.50,95.77 70.00,94.65 70.50,93.52 71.00,92.37 71.50,91.21 72.00,90.03 72.50,88.83 73.00,87.62 73.50,86.39 74.00,85.15 74.50,83.90 75.00,82.64 75.50,81.36 76.00,80.08 76.50,78.78 77.00,77.48 77.50,76.16 78.00,74.84 78.50,73.51 79.00,72.17 79.50,70.83 80.00,69.48 80.50,68.13 81.00,66.77 81.50,65.41 82.00,64.05 82.50,62.68 83.00,61.32 83.50,59.95 84.00,58.59 84.50,57.22 85.00,55.86 85.50,54.50 86.00,53.14 86.50,51.79 87.00,50.44 87.50,49.10 88.00,47.76 88.50,46.43 89.00,45.10 89.50,43.79 90.00,42.48 90.50,41.18 91.00,39.89 91.50,38.62 92.00,37.35 92.50,36.10 93.00,34.85 93.50,33.63 94.00,32.41 94.50,31.21 95.00,30.03 95.50,28.86 96.00,27.71 96.50,26.57 97.00,25.45 97.50,24.35 98.00,23.27 98.50,22.21 99.00,21.17 99.50,20.15 100.00,19.15 100.50,18.17 101.00,17.21 101.50,16.28 102.00,15.37 102.50,14.48 103.00,13.61 103.50,12.77 104.00,11.96 104.50,11.17 105.00,10.40 105.50,9.67 106.00,8.95 106.50,8.27 107.00,7.61 107.50,6.98 108.00,6.37 108.50,5.80 109.00,5.25 109.50,4.73 110.00,4.24 110.50,3.78 111.00,3.35 111.50,2.95 112.00,2.58 112.50,2.24 113.00,1.93 113.50,1.65 114.00,1.40 114.50,1.18 115.00,0.99 115.50,0.83 116.00,0.80 116.50,0.80 117.00,0.80 117.50,0.80 118.00,0.80 118.50,0.80 119.00,0.80 119.50,0.80 120.00,0.80 120.50,0.95" fill="none" stroke="#000" stroke-width="1.0"/></svg>
<div style="position:absolute;left:469px;top:200px;width:69px;height:209px;background:#bbbbbb;box-sizing:border-box;border:1px solid #444444;"></div>
<div class="t" style="left:483.5px;top:205.0px;font-size:11.8px;font-weight:bold;color:#4c5157;transform:scaleX(0.883);text-rendering:geometricPrecision;">LPF1</div>
<div class="t" style="left:481px;top:225px;font-size:9px;font-weight:bold;color:#1e1e24;transform:scaleX(0.87);">F</div>
<div style="position:absolute;left:481px;top:233px;width:13px;height:165px;background:#606060;box-sizing:border-box;border:1px solid #2e2e2e;"></div>
<svg style="position:absolute;left:482px;top:234.5px" width="11" height="4"><rect x="0" y="0.5" width="11" height="2.6" fill="#d0d0d0"/></svg>
<div class="t" style="left:512.5px;top:225.5px;font-size:9px;font-weight:bold;color:#1e1e24;transform:scaleX(0.87);">Q</div>
<div style="position:absolute;left:512px;top:233.5px;width:13px;height:164.5px;background:#606060;box-sizing:border-box;border:1px solid #2e2e2e;"></div>
<svg style="position:absolute;left:513px;top:235.0px" width="11" height="4"><rect x="0" y="0.5" width="11" height="2.6" fill="#d0d0d0"/></svg>
<div style="position:absolute;left:469px;top:411px;width:69px;height:209px;background:#bbbbbb;box-sizing:border-box;border:1px solid #444444;"></div>
<div class="t" style="left:486px;top:417.3px;font-size:11.8px;font-weight:bold;color:#4c5157;transform:scaleX(0.883);text-rendering:geometricPrecision;">LPF2</div>
<div class="t" style="left:478.5px;top:434.8px;font-size:9px;font-weight:bold;color:#1e1e24;transform:scaleX(0.87);">F</div>
<div style="position:absolute;left:478px;top:443px;width:13px;height:165px;background:#606060;box-sizing:border-box;border:1px solid #2e2e2e;"></div>
<svg style="position:absolute;left:479px;top:444.5px" width="11" height="4"><rect x="0" y="0.5" width="11" height="2.6" fill="#d0d0d0"/></svg>
<div class="t" style="left:510px;top:435.3px;font-size:9px;font-weight:bold;color:#1e1e24;transform:scaleX(0.87);">Q</div>
<div style="position:absolute;left:510px;top:444px;width:13px;height:165px;background:#606060;box-sizing:border-box;border:1px solid #2e2e2e;"></div>
<svg style="position:absolute;left:511px;top:445.5px" width="11" height="4"><rect x="0" y="0.5" width="11" height="2.6" fill="#d0d0d0"/></svg>
<div style="position:absolute;left:540px;top:200px;width:137px;height:209px;background:#bbbbbb;box-sizing:border-box;border:1px solid #444444;"></div>
<div class="t" style="left:555px;top:204.8px;font-size:11.8px;font-weight:bold;color:#4c5157;transform:scaleX(0.883);text-rendering:geometricPrecision;">ADSR1</div>
<div class="t" style="left:554.5px;top:220.5px;font-size:9px;font-weight:bold;color:#1e1e24;transform:scaleX(0.87);">DUR</div>
<div style="position:absolute;left:554px;top:229px;width:13px;height:85px;background:#606060;box-sizing:border-box;border:1px solid #2e2e2e;"></div>
<svg style="position:absolute;left:555px;top:299.5px" width="11" height="4"><rect x="0" y="0.5" width="11" height="2.6" fill="#d0d0d0"/></svg>
<div class="t" style="left:591.5px;top:219.5px;font-size:9px;font-weight:bold;color:#1e1e24;transform:scaleX(0.87);">A</div>
<div style="position:absolute;left:591px;top:228px;width:13px;height:85px;background:#606060;box-sizing:border-box;border:1px solid #2e2e2e;"></div>
<svg style="position:absolute;left:592px;top:301.5px" width="11" height="4"><rect x="0" y="0.5" width="11" height="2.6" fill="#d0d0d0"/></svg>
<div class="t" style="left:610.5px;top:218.5px;font-size:9px;font-weight:bold;color:#1e1e24;transform:scaleX(0.87);">D</div>
<div style="position:absolute;left:610px;top:227px;width:13px;height:85px;background:#606060;box-sizing:border-box;border:1px solid #2e2e2e;"></div>
<svg style="position:absolute;left:611px;top:288.5px" width="11" height="4"><rect x="0" y="0.5" width="11" height="2.6" fill="#d0d0d0"/></svg>
<div class="t" style="left:631.5px;top:219.5px;font-size:9px;font-weight:bold;color:#1e1e24;transform:scaleX(0.87);">S</div>
<div style="position:absolute;left:631px;top:228px;width:13px;height:85px;background:#606060;box-sizing:border-box;border:1px solid #2e2e2e;"></div>
<svg style="position:absolute;left:632px;top:249.5px" width="11" height="4"><rect x="0" y="0.5" width="11" height="2.6" fill="#d0d0d0"/></svg>
<div class="t" style="left:650.5px;top:219.5px;font-size:9px;font-weight:bold;color:#1e1e24;transform:scaleX(0.87);">R</div>
<div style="position:absolute;left:650px;top:228px;width:13px;height:85px;background:#606060;box-sizing:border-box;border:1px solid #2e2e2e;"></div>
<svg style="position:absolute;left:651px;top:289.5px" width="11" height="4"><rect x="0" y="0.5" width="11" height="2.6" fill="#d0d0d0"/></svg>
<div class="t" style="left:550px;top:323px;font-size:10px;font-weight:bold;color:#17171c;transform:scaleX(0.94);">adsr_1_wave</div>
<svg style="position:absolute;left:550px;top:333px" width="114" height="65"><rect x="0.5" y="0.5" width="113" height="64" fill="#00fc04" stroke="#202020"/><line x1="0.5" y1="32.5" x2="112" y2="32.5" stroke="#000" stroke-width="1.1"/></svg>
<div style="position:absolute;left:540px;top:412px;width:137px;height:209px;background:#bbbbbb;box-sizing:border-box;border:1px solid #444444;"></div>
<div class="t" style="left:555px;top:416.8px;font-size:11.8px;font-weight:bold;color:#4c5157;transform:scaleX(0.883);text-rendering:geometricPrecision;">ADSR2</div>
<div class="t" style="left:554.5px;top:432.5px;font-size:9px;font-weight:bold;color:#1e1e24;transform:scaleX(0.87);">DUR</div>
<div style="position:absolute;left:554px;top:441px;width:13px;height:85px;background:#606060;box-sizing:border-box;border:1px solid #2e2e2e;"></div>
<svg style="position:absolute;left:555px;top:511.5px" width="11" height="4"><rect x="0" y="0.5" width="11" height="2.6" fill="#d0d0d0"/></svg>
<div class="t" style="left:591.5px;top:431.5px;font-size:9px;font-weight:bold;color:#1e1e24;transform:scaleX(0.87);">A</div>
<div style="position:absolute;left:591px;top:440px;width:13px;height:85px;background:#606060;box-sizing:border-box;border:1px solid #2e2e2e;"></div>
<svg style="position:absolute;left:592px;top:513.5px" width="11" height="4"><rect x="0" y="0.5" width="11" height="2.6" fill="#d0d0d0"/></svg>
<div class="t" style="left:610.5px;top:430.5px;font-size:9px;font-weight:bold;color:#1e1e24;transform:scaleX(0.87);">D</div>
<div style="position:absolute;left:610px;top:439px;width:13px;height:85px;background:#606060;box-sizing:border-box;border:1px solid #2e2e2e;"></div>
<svg style="position:absolute;left:611px;top:500.5px" width="11" height="4"><rect x="0" y="0.5" width="11" height="2.6" fill="#d0d0d0"/></svg>
<div class="t" style="left:631.5px;top:431.5px;font-size:9px;font-weight:bold;color:#1e1e24;transform:scaleX(0.87);">S</div>
<div style="position:absolute;left:631px;top:440px;width:13px;height:85px;background:#606060;box-sizing:border-box;border:1px solid #2e2e2e;"></div>
<svg style="position:absolute;left:632px;top:461.5px" width="11" height="4"><rect x="0" y="0.5" width="11" height="2.6" fill="#d0d0d0"/></svg>
<div class="t" style="left:650.5px;top:431.5px;font-size:9px;font-weight:bold;color:#1e1e24;transform:scaleX(0.87);">R</div>
<div style="position:absolute;left:650px;top:440px;width:13px;height:85px;background:#606060;box-sizing:border-box;border:1px solid #2e2e2e;"></div>
<svg style="position:absolute;left:651px;top:501.5px" width="11" height="4"><rect x="0" y="0.5" width="11" height="2.6" fill="#d0d0d0"/></svg>
<div class="t" style="left:552px;top:535px;font-size:10px;font-weight:bold;color:#17171c;transform:scaleX(0.94);">adsr_2_wave</div>
<svg style="position:absolute;left:552px;top:545px" width="113" height="65"><rect x="0.5" y="0.5" width="112" height="64" fill="#00fc04" stroke="#202020"/><line x1="0.5" y1="32.5" x2="111" y2="32.5" stroke="#000" stroke-width="1.1"/></svg>
<div style="position:absolute;left:678px;top:201px;width:41px;height:421px;background:#bbbbbb;box-sizing:border-box;border:1px solid #444444;"></div>
<div class="t" style="left:693px;top:205.3px;font-size:11.8px;font-weight:bold;color:#4c5157;transform:scaleX(0.883);text-rendering:geometricPrecision;">MIX</div>
<div style="position:absolute;left:693px;top:219px;width:13px;height:397px;background:#606060;box-sizing:border-box;border:1px solid #2e2e2e;"></div>
<svg style="position:absolute;left:694px;top:415.5px" width="11" height="4"><rect x="0" y="0.5" width="11" height="2.6" fill="#d0d0d0"/></svg>
</body></html>
